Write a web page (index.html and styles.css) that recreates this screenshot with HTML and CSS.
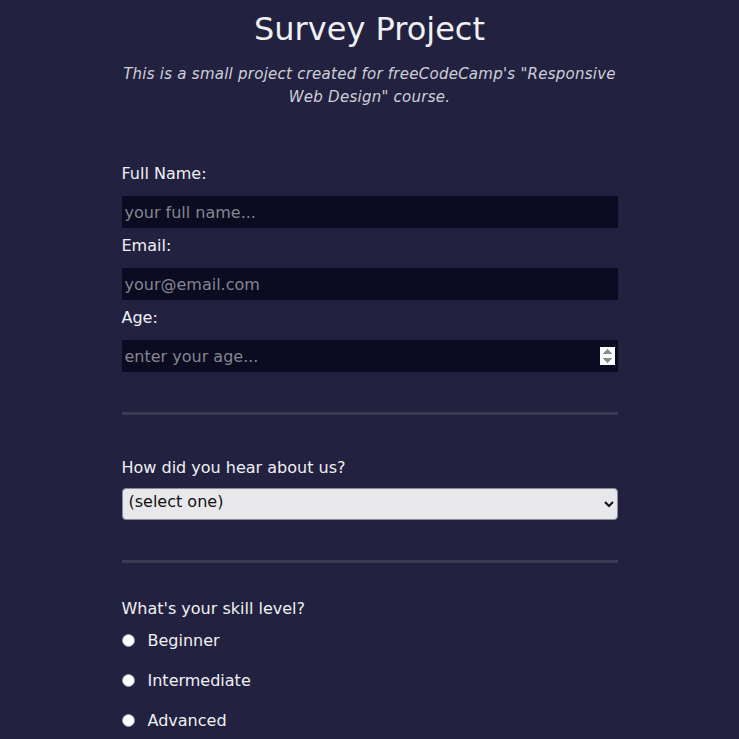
FILE: index.html
```html
<!DOCTYPE html>
<html lang="en">
<head>
<meta charset="utf-8">
<title>Survey Project</title>
<link rel="stylesheet" href="styles.css">
</head>
<body>
<header class="header">
  <h1 class="title">Survey Project</h1>
  <p class="description">This is a small project created for freeCodeCamp's "Responsive Web Design" course.</p>
</header>
<form class="survey">
  <section class="group">
    <label class="label" for="name">Full Name:</label>
    <input class="field" id="name" type="text" placeholder="your full name...">
    <label class="label" for="email">Email:</label>
    <input class="field" id="email" type="email" placeholder="your@email.com">
    <label class="label" for="age">Age:</label>
    <input class="field" id="age" type="number" placeholder="enter your age...">
  </section>
  <hr class="rule rule-first">
  <section class="group">
    <label class="label label-select" for="source">How did you hear about us?</label>
    <select class="dropdown" id="source">
      <option>(select one)</option>
      <option>Friend</option>
      <option>Search engine</option>
    </select>
  </section>
  <hr class="rule rule-second">
  <section class="group">
    <p class="label label-radio">What's your skill level?</p>
    <label class="radio"><input class="radio-input" type="radio" name="skill"> <span>Beginner</span></label>
    <label class="radio"><input class="radio-input" type="radio" name="skill"> <span>Intermediate</span></label>
    <label class="radio"><input class="radio-input" type="radio" name="skill"> <span>Advanced</span></label>
  </section>
</form>
</body>
</html>
```
FILE: styles.css
```css
html, body {
  background: #222240;
}
body {
  margin: 0;
  font-family: "DejaVu Sans", sans-serif;
  color: #f0f0f4;
}
.header {
  width: 496px;
  margin: 0 auto;
  text-align: center;
}
.title {
  margin: 0;
  padding-top: 9px;
  font-size: 32px;
  font-weight: 400;
  line-height: 40px;
}
.description {
  margin: 14px 0 0;
  font-style: italic;
  font-size: 15px;
  letter-spacing: 0.25px;
  line-height: 23px;
  color: #cfcfd8;
}
.survey {
  width: 496px;
  margin: 55px auto 0;
}
.group {
  display: flex;
  flex-direction: column;
}
.label {
  margin: 0;
  font-size: 16px;
  line-height: 20px;
  padding-bottom: 12px;
}
.field {
  height: 32px;
  box-sizing: border-box;
  border: none;
  background: #0b0b22;
  color: #f0f0f4;
  font-family: inherit;
  font-size: 16px;
  padding: 0 3px;
  margin-bottom: 8px;
}
.field::placeholder {
  color: #85858f;
}
.field::-webkit-inner-spin-button {
  opacity: 1;
}
.rule {
  border: none;
  height: 3px;
  background: #3a3a52;
}
.rule-first {
  margin: 32px 0 43px;
}
.rule-second {
  margin: 40px 0 36px;
}
.label-select {
  padding-bottom: 10px;
}
.dropdown {
  height: 32px;
  border: 1px solid #8a8a9a;
  border-radius: 4px;
  background: #e8e8ec;
  font-family: inherit;
  font-size: 16px;
  color: #111;
  padding: 0 2px 6px;
}
.label-radio {
  padding-bottom: 1px;
}
.radio {
  display: flex;
  align-items: center;
  gap: 13px;
  height: 40px;
  font-size: 16px;
}
.radio-input {
  appearance: none;
  -webkit-appearance: none;
  margin: 0;
  width: 13px;
  height: 13px;
  box-sizing: border-box;
  border-radius: 50%;
  background: #fff;
  border: 1.5px solid #9a9aac;
}
```
